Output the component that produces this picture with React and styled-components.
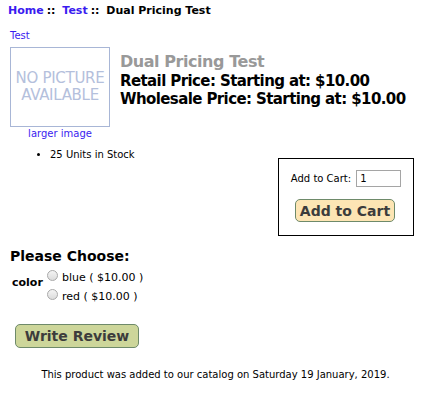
import React from "react";
import styled, { createGlobalStyle } from "styled-components";

const Global = createGlobalStyle`
  html, body { margin: 0; padding: 0; background: #fff; }
  body { font-family: Verdana, "DejaVu Sans", sans-serif; color: #000; }
`;

const Page = styled.div`
  width: 431px;
  padding: 4px 0 0 0;
  box-sizing: border-box;
`;

const Crumbs = styled.div`
  padding-left: 8px;
  font-size: 11px;
  font-weight: bold;
  line-height: 13px;
  height: 13px;
`;

const Link = styled.a`
  color: #3a1cf0;
  text-decoration: none;
  cursor: pointer;
`;

const Sep = styled.span`
  color: #000;
  margin: 0 3px;
`;

const Top = styled.div`
  display: flex;
  margin-top: 13px;
`;

const ImageCol = styled.div`
  margin-left: 10px;
  width: 100px;
  display: flex;
  flex-direction: column;
`;

const SmallLink = styled(Link)`
  font-size: 10px;
  line-height: 12px;
`;

const NoPic = styled.div`
  margin-top: 5px;
  width: 100px;
  height: 80px;
  box-sizing: border-box;
  border: 1px solid #a8b6d6;
  display: flex;
  flex-direction: column;
  align-items: center;
  justify-content: center;
  color: #b4c0dc;
  font-size: 15px;
  line-height: 17px;
  letter-spacing: -0.3px;
`;

const LargerLink = styled(SmallLink)`
  text-align: center;
  margin-top: 1px;
`;

const Info = styled.div`
  margin-left: 10px;
  padding-top: 22px;
`;

const Title = styled.h1`
  margin: 0;
  font-size: 16px;
  line-height: 20px;
  color: #999;
  font-weight: bold;
  letter-spacing: -0.45px;
`;

const Price = styled.h2`
  margin: 0;
  font-size: 15px;
  line-height: 18px;
  font-weight: bold;
  letter-spacing: -0.6px;
`;

const Middle = styled.div`
  display: flex;
  justify-content: space-between;
  align-items: flex-start;
  margin-top: 8px;
  padding-right: 17px;
`;

const List = styled.ul`
  margin: 0;
  padding-left: 50px;
  font-size: 10px;
  line-height: 13px;
`;

const CartBox = styled.div`
  margin-top: 10px;
  width: 136px;
  height: 78px;
  box-sizing: border-box;
  border: 1px solid #000;
  display: flex;
  flex-direction: column;
  align-items: center;
  padding-top: 11px;
`;

const QtyRow = styled.div`
  display: flex;
  align-items: center;
  font-size: 10px;
  gap: 5px;
  margin-left: 0;
`;

const QtyInput = styled.input`
  width: 45px;
  height: 17px;
  box-sizing: border-box;
  border: 1px solid #a5a5a5;
  font-family: inherit;
  font-size: 10px;
  padding: 0 3px;
  margin: 0;
`;

const Button = styled.button`
  width: ${(p) => p.$w}px;
  height: ${(p) => p.$h}px;
  box-sizing: border-box;
  background: ${(p) => p.$bg};
  border: 1px solid #6e8a6a;
  border-radius: 5px;
  font-family: inherit;
  font-weight: bold;
  font-size: 14px;
  color: #3c3c3c;
  padding: 0;
  cursor: pointer;
`;

const CartButton = styled(Button)`
  margin-top: 12px;
  margin-left: -2px;
`;

const Choose = styled.div`
  margin-top: 11px;
  padding-left: 10px;
`;

const ChooseTitle = styled.h3`
  margin: 0;
  font-size: 14px;
  line-height: 18px;
  font-weight: bold;
`;

const AttrRow = styled.div`
  display: flex;
  align-items: flex-start;
  margin-top: 5px;
`;

const AttrLabel = styled.div`
  font-size: 11px;
  font-weight: bold;
  padding: 6px 0 0 2px;
  width: 35px;
`;

const Options = styled.div`
  display: flex;
  flex-direction: column;
`;

const Option = styled.label`
  display: flex;
  align-items: flex-start;
  height: 19px;
  font-size: 11px;
  line-height: 13px;
`;

const Radio = styled.span`
  width: 11px;
  height: 11px;
  border-radius: 50%;
  box-sizing: border-box;
  border: 1px solid #a9a9a9;
  background: linear-gradient(#f4f4f4, #dcdcdc);
  margin: 0 4px 0 0;
  flex: none;
`;

const OptText = styled.span`
  margin-top: 1px;
`;

const Review = styled.div`
  margin: 16px 0 0 15px;
`;

const Footer = styled.p`
  margin: 20px 0 0 0;
  text-align: center;
  font-size: 10px;
  line-height: 13px;
`;

export default function App() {
  return (
    <>
      <Global />
      <Page>
        <Crumbs>
          <Link>Home</Link>
          <Sep>::</Sep> <Link>Test</Link>
          <Sep>::</Sep> Dual Pricing Test
        </Crumbs>
        <Top>
          <ImageCol>
            <SmallLink>Test</SmallLink>
            <NoPic>
              <span>NO PICTURE</span>
              <span>AVAILABLE</span>
            </NoPic>
            <LargerLink>larger image</LargerLink>
          </ImageCol>
          <Info>
            <Title>Dual Pricing Test</Title>
            <Price>Retail Price: Starting at: $10.00</Price>
            <Price>Wholesale Price: Starting at: $10.00</Price>
          </Info>
        </Top>
        <Middle>
          <List>
            <li>25 Units in Stock</li>
          </List>
          <CartBox>
            <QtyRow>
              Add to Cart: <QtyInput defaultValue="1" />
            </QtyRow>
            <CartButton $w={100} $h={23} $bg="#fde5b4">
              Add to Cart
            </CartButton>
          </CartBox>
        </Middle>
        <Choose>
          <ChooseTitle>Please Choose:</ChooseTitle>
          <AttrRow>
            <AttrLabel>color</AttrLabel>
            <Options>
              <Option>
                <Radio />
                <OptText>blue ( $10.00 )</OptText>
              </Option>
              <Option>
                <Radio />
                <OptText>red ( $10.00 )</OptText>
              </Option>
            </Options>
          </AttrRow>
        </Choose>
        <Review>
          <Button $w={124} $h={24} $bg="#cdd69a">
            Write Review
          </Button>
        </Review>
        <Footer>This product was added to our catalog on Saturday 19 January, 2019.</Footer>
      </Page>
    </>
  );
}
